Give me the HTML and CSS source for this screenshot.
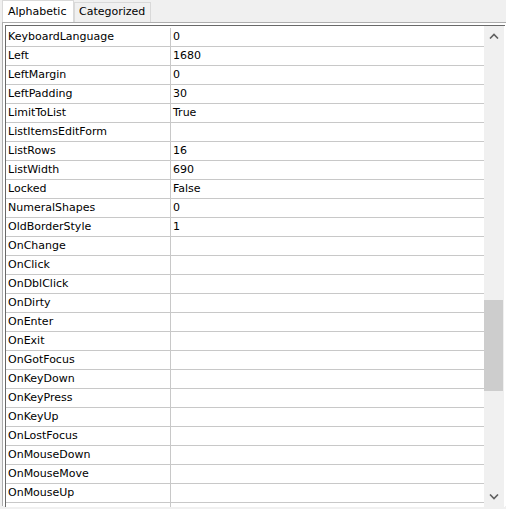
FILE: index.html
```html
<!DOCTYPE html>
<html>
<head>
<meta charset="utf-8">
<link rel="stylesheet" href="styles.css">
</head>
<body>
<div class="tabs">
  <div class="tab active">Alphabetic</div>
  <div class="tab">Categorized</div>
</div>
<div class="panel">
  <div class="grid">
    <div class="rows">
      <div class="row"><div class="name">KeyboardLanguage</div><div class="value">0</div></div>
      <div class="row"><div class="name">Left</div><div class="value">1680</div></div>
      <div class="row"><div class="name">LeftMargin</div><div class="value">0</div></div>
      <div class="row"><div class="name">LeftPadding</div><div class="value">30</div></div>
      <div class="row"><div class="name">LimitToList</div><div class="value">True</div></div>
      <div class="row"><div class="name">ListItemsEditForm</div><div class="value"></div></div>
      <div class="row"><div class="name">ListRows</div><div class="value">16</div></div>
      <div class="row"><div class="name">ListWidth</div><div class="value">690</div></div>
      <div class="row"><div class="name">Locked</div><div class="value">False</div></div>
      <div class="row"><div class="name">NumeralShapes</div><div class="value">0</div></div>
      <div class="row"><div class="name">OldBorderStyle</div><div class="value">1</div></div>
      <div class="row"><div class="name">OnChange</div><div class="value"></div></div>
      <div class="row"><div class="name">OnClick</div><div class="value"></div></div>
      <div class="row"><div class="name">OnDblClick</div><div class="value"></div></div>
      <div class="row"><div class="name">OnDirty</div><div class="value"></div></div>
      <div class="row"><div class="name">OnEnter</div><div class="value"></div></div>
      <div class="row"><div class="name">OnExit</div><div class="value"></div></div>
      <div class="row"><div class="name">OnGotFocus</div><div class="value"></div></div>
      <div class="row"><div class="name">OnKeyDown</div><div class="value"></div></div>
      <div class="row"><div class="name">OnKeyPress</div><div class="value"></div></div>
      <div class="row"><div class="name">OnKeyUp</div><div class="value"></div></div>
      <div class="row"><div class="name">OnLostFocus</div><div class="value"></div></div>
      <div class="row"><div class="name">OnMouseDown</div><div class="value"></div></div>
      <div class="row"><div class="name">OnMouseMove</div><div class="value"></div></div>
      <div class="row"><div class="name">OnMouseUp</div><div class="value"></div></div>
      <div class="row"><div class="name"></div><div class="value"></div></div>
    </div>
    <div class="scrollbar">
      <div class="sbtn">
        <svg width="10" height="6" viewBox="0 0 10 6"><path d="M1 5.5 L5 1.5 L9 5.5" fill="none" stroke="#606060" stroke-width="1.6"/></svg>
      </div>
      <div class="track"><div class="thumb"></div></div>
      <div class="sbtn">
        <svg width="10" height="6" viewBox="0 0 10 6"><path d="M1 0.5 L5 4.5 L9 0.5" fill="none" stroke="#606060" stroke-width="1.6"/></svg>
      </div>
    </div>
  </div>
</div>
</body>
</html>
```
FILE: styles.css
```css
html, body {
  margin: 0;
  padding: 0;
}
body {
  width: 506px;
  height: 509px;
  overflow: hidden;
  background: #f0f0f0;
  font-family: "DejaVu Sans", sans-serif;
  font-size: 11px;
  color: #000;
}
.tabs {
  display: flex;
  align-items: flex-end;
  height: 22px;
  padding-left: 2px;
}
.tab {
  box-sizing: border-box;
  height: 20px;
  line-height: 18px;
  padding: 0 5px 0 4px;
  border: 1px solid #d9d9d9;
  border-bottom: none;
  background: #f0f0f0;
  white-space: nowrap;
}
.tab.active {
  height: 22px;
  line-height: 22px;
  padding: 0 5px;
  background: #fff;
  width: 72px;
}
.panel {
  margin-left: 2px;
  border-top: 1px solid #adadad;
  border-left: 1px solid #adadad;
  padding: 2px 0 0 2px;
  background: #fff;
  height: 484px;
  box-sizing: border-box;
}
.grid {
  display: flex;
  border-top: 1px solid #696969;
  border-left: 1px solid #696969;
  background: #fff;
  height: 482px;
  box-sizing: border-box;
  width: 500px;
}
.rows {
  width: 478px;
  padding-top: 2px;
  overflow: hidden;
}
.row {
  display: flex;
  height: 19px;
  box-sizing: border-box;
  border-bottom: 1px solid #c8c8c8;
  line-height: 18px;
}
.name {
  width: 165px;
  box-sizing: border-box;
  padding-left: 2px;
  border-right: 1px solid #c8c8c8;
  white-space: nowrap;
  overflow: hidden;
}
.value {
  flex: 1;
  padding-left: 2px;
  white-space: nowrap;
}
.scrollbar {
  width: 20px;
  display: flex;
  flex-direction: column;
  background: #f0f0f0;
}
.sbtn {
  height: 20px;
  display: flex;
  align-items: center;
  justify-content: center;
}
.track {
  flex: 1;
}
.thumb {
  margin-top: 254px;
  width: 19px;
  height: 91px;
  background: #cdcdcd;
}
```
